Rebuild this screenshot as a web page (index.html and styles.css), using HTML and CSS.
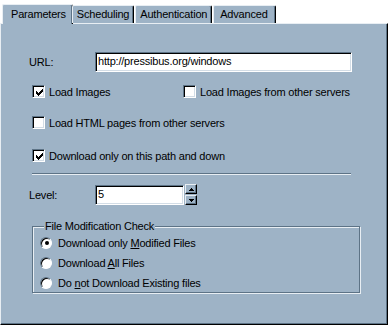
FILE: index.html
```html
<!DOCTYPE html>
<html lang="en">
<head>
    <meta charset="UTF-8">
    <title>Parameters</title>
    <link rel="stylesheet" href="styles.css">
</head>
<body>
    <div class="tabs">
        <div class="tab active">Parameters</div>
        <div class="tab">Scheduling</div>
        <div class="tab">Authentication</div>
        <div class="tab last">Advanced</div>
    </div>

    <div class="panel">
        <div class="field-row url-row">
            <span class="label">URL:</span>
            <div class="textbox url-box">http://pressibus.org/windows</div>
        </div>

        <div class="check-row row-1">
            <div class="check first-col">
                <span class="box"><svg width="7" height="7" viewBox="0 0 7 7"><path d="M0 2h1v1h1v1h1v-1h1v-1h1v-1h1v-1h1v3h-1v1h-1v1h-1v1h-1v1h-1v-1h-1v-1h-1z" fill="#000"/></svg></span>
                Load Images
            </div>
            <div class="check">
                <span class="box"></span>
                Load Images from other servers
            </div>
        </div>

        <div class="check-row row-2">
            <div class="check">
                <span class="box"></span>
                Load HTML pages from other servers
            </div>
        </div>

        <div class="check-row row-3">
            <div class="check">
                <span class="box"><svg width="7" height="7" viewBox="0 0 7 7"><path d="M0 2h1v1h1v1h1v-1h1v-1h1v-1h1v-1h1v3h-1v1h-1v1h-1v1h-1v1h-1v-1h-1v-1h-1z" fill="#000"/></svg></span>
                Download only on this path and down
            </div>
        </div>

        <div class="separator"></div>

        <div class="field-row level-row">
            <span class="label">Level:</span>
            <div class="textbox level-box">5</div>
            <div class="spinner">
                <div class="spin-btn"><svg width="5" height="3" viewBox="0 0 5 3"><path d="M2 0h1v1h1v1h1v1h-5v-1h1v-1h1z" fill="#000"/></svg></div>
                <div class="spin-btn"><svg width="5" height="3" viewBox="0 0 5 3"><path d="M0 0h5v1h-1v1h-1v1h-1v-1h-1v-1h-1z" fill="#000"/></svg></div>
            </div>
        </div>

        <fieldset class="group">
            <legend>File Modification Check</legend>
            <div class="radio-row">
                <span class="radio selected"></span>
                <span>Download only <u>M</u>odified Files</span>
            </div>
            <div class="radio-row">
                <span class="radio"></span>
                <span>Download <u>A</u>ll Files</span>
            </div>
            <div class="radio-row">
                <span class="radio"></span>
                <span>Do <u>n</u>ot Download Existing files</span>
            </div>
        </fieldset>
    </div>
</body>
</html>
```

FILE: styles.css
```css
/* Win9x style property page */
body {
    margin: 0;
    background: #fff;
    font-family: "Liberation Sans", Arial, sans-serif;
    font-size: 11px;
    letter-spacing: -0.2px;
    color: #000;
}

/* Tab strip */
.tabs {
    display: flex;
    align-items: flex-end;
    height: 23px;
    padding-left: 4px;
    position: relative;
    z-index: 1;
}
.tab {
    height: 17px;
    line-height: 17px;
    padding: 0 4px 0 4px;
    margin-right: 1px;
    background: #9eb3c6;
    border-top: 1px solid #e8eef3;
    border-left: 1px solid #e8eef3;
    border-right: 1px solid #000;
    box-shadow: inset -1px 0 0 #5d7386;
    border-radius: 2px 2px 0 0;
}
.tab.active {
    height: 19px;
    line-height: 19px;
    margin-left: -2px;
    margin-right: -1px;
    margin-bottom: -1px;
    padding: 0 6px 0 8px;
}
.tab.last {
    padding: 0 7px 0 6px;
}

/* Page body */
.panel {
    width: 359px;
    height: 272px;
    padding: 28px 0 0 27px;
    background: #9eb3c6;
    border-top: 1px solid #e8eef3;
    border-left: 1px solid #e8eef3;
    border-right: 1px solid #000;
    border-bottom: 1px solid #000;
    box-shadow: inset -1px -1px 0 #5d7386;
}

.field-row {
    display: flex;
    align-items: center;
}
.label {
    width: 67px;
    padding-left: 1px;
    box-sizing: border-box;
}
.textbox {
    box-sizing: border-box;
    height: 20px;
    line-height: 15px;
    padding: 1px 2px;
    background: #fff;
    border: 1px solid;
    border-color: #5d7386 #fff #fff #5d7386;
    box-shadow: inset 1px 1px 0 #000, inset -1px -1px 0 #d3dde6;
    white-space: nowrap;
}
.url-box {
    width: 257px;
}
.level-box {
    width: 89px;
}

.check-row {
    display: flex;
    align-items: center;
    height: 13px;
    padding-left: 4px;
}
.row-1 { margin-top: 13px; }
.row-2 { margin-top: 18px; }
.row-3 { margin-top: 20px; }
.check {
    display: flex;
    align-items: center;
    gap: 4px;
    white-space: nowrap;
}
.first-col {
    width: 151px;
}
.box {
    box-sizing: border-box;
    width: 13px;
    height: 13px;
    background: #fff;
    border: 1px solid;
    border-color: #5d7386 #fff #fff #5d7386;
    box-shadow: inset 1px 1px 0 #000, inset -1px -1px 0 #d3dde6;
    display: flex;
    align-items: center;
    justify-content: center;
}
.box svg {
    display: block;
    margin: 1px 0 0 1px;
}

.separator {
    width: 319px;
    margin: 11px 0 0 4px;
    border-top: 1px solid #5d7386;
    border-bottom: 1px solid #e8eef3;
}

.level-row {
    margin-top: 9px;
}
.spinner {
    display: flex;
    flex-direction: column;
    gap: 1px;
    margin-left: 1px;
}
.spin-btn {
    box-sizing: border-box;
    width: 12px;
    height: 10px;
    background: #9eb3c6;
    border: 1px solid;
    border-color: #e8eef3 #000 #000 #e8eef3;
    box-shadow: inset -1px -1px 0 #5d7386;
    display: flex;
    align-items: center;
    justify-content: center;
}
.spin-btn svg {
    display: block;
}

/* Group box */
.group {
    width: 319px;
    height: 67px;
    margin: 15px 0 0 4px;
    padding: 4px 0 0 7px;
    border: 1px solid #5d7386;
    box-shadow: 1px 1px 0 #e8eef3, inset 1px 1px 0 #e8eef3;
}
.group legend {
    padding: 0 1px;
    margin-left: 4px;
    background: #9eb3c6;
}
.radio-row {
    display: flex;
    align-items: center;
    gap: 6px;
    height: 13px;
    margin-bottom: 7px;
}
.radio {
    box-sizing: border-box;
    width: 12px;
    height: 12px;
    border-radius: 50%;
    background: #fff;
    border: 1px solid;
    border-color: #5d7386 #fff #fff #5d7386;
    box-shadow: inset 1px 1px 0 #000;
    display: flex;
    align-items: center;
    justify-content: center;
}
.radio.selected::after {
    content: "";
    width: 4px;
    height: 4px;
    border-radius: 50%;
    background: #000;
    margin: 1px 0 0 1px;
}
```
